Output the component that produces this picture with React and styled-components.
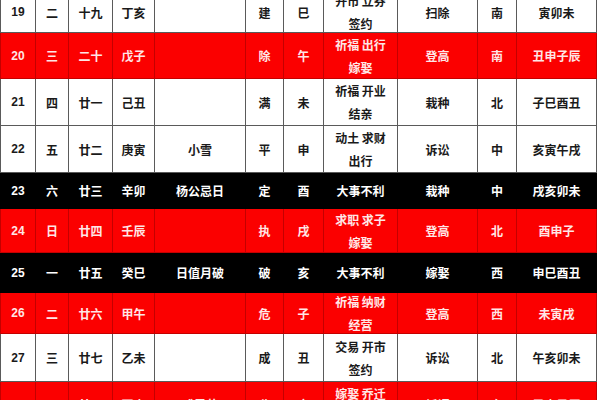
import React from "react";
import styled, { createGlobalStyle } from "styled-components";

const GlobalStyle = createGlobalStyle`
  html, body {
    margin: 0;
    padding: 0;
    background: #ffffff;
  }
  body {
    font-family: "Noto Sans CJK SC", "Noto Sans", sans-serif;
  }
`;

const cols = [35, 33, 44, 42, 91, 38, 40, 74, 80, 39, 80];

const rows = [
  { h: 36, tone: "white", d: ["19", "二", "十九", "丁亥", "", "建", "巳", ["开市 立券", "签约"], "扫除", "南", "寅卯未"] },
  { h: 46, tone: "red", d: ["20", "三", "二十", "戊子", "", "除", "午", ["祈福 出行", "嫁娶"], "登高", "南", "丑申子辰"] },
  { h: 47, tone: "white", d: ["21", "四", "廿一", "己丑", "", "满", "未", ["祈福 开业", "结亲"], "栽种", "北", "子巳酉丑"] },
  { h: 47, tone: "white", d: ["22", "五", "廿二", "庚寅", "小雪", "平", "申", ["动土 求财", "出行"], "诉讼", "中", "亥寅午戌"] },
  { h: 36, tone: "black", d: ["23", "六", "廿三", "辛卯", "杨公忌日", "定", "酉", "大事不利", "栽种", "中", "戌亥卯未"] },
  { h: 44, tone: "red", d: ["24", "日", "廿四", "壬辰", "", "执", "戌", ["求职 求子", "嫁娶"], "登高", "北", "酉申子"] },
  { h: 40, tone: "black", d: ["25", "一", "廿五", "癸巳", "日值月破", "破", "亥", "大事不利", "嫁娶", "西", "申巳酉丑"] },
  { h: 41, tone: "red", d: ["26", "二", "廿六", "甲午", "", "危", "子", ["祈福 纳财", "经营"], "登高", "西", "未寅戌"] },
  { h: 48, tone: "white", d: ["27", "三", "廿七", "乙未", "", "成", "丑", ["交易 开市", "签约"], "诉讼", "北", "午亥卯未"] },
  { h: 46, tone: "red", d: ["28", "四", "廿八", "丙申", "感恩节", "收", "寅", ["嫁娶 乔迁", "祭祀"], "祈福", "东", "巳申子辰"] },
];

const tones = {
  white: { bg: "#ffffff", fg: "#1a1a1a", line: "#5a5a5a" },
  red: { bg: "#fb0000", fg: "#ffe6e6", line: "#c40000" },
  black: { bg: "#000000", fg: "#ffffff", line: "#000000" },
};

export default function App() {
  return (
    <>
      <GlobalStyle />
      <Viewport>
        <Table>
          <colgroup>
            {cols.map((w, i) => (
              <Col key={i} $w={w} />
            ))}
          </colgroup>
          <tbody>
            {rows.map((row) => (
              <Row key={row.d[0]} $h={row.h} $tone={row.tone}>
                {row.d.map((cell, i) => (
                  <Cell key={i} $tone={row.tone} $num={i === 0}>
                    {Array.isArray(cell) ? (
                      <Lines>
                        {cell.map((line, j) => (
                          <span key={j}>{line}</span>
                        ))}
                      </Lines>
                    ) : (
                      cell
                    )}
                  </Cell>
                ))}
              </Row>
            ))}
          </tbody>
        </Table>
      </Viewport>
    </>
  );
}

const Viewport = styled.div`
  width: 600px;
  height: 400px;
  overflow: hidden;
  background: #ffffff;
`;

const Table = styled.table`
  width: 596px;
  margin-top: -9px;
  border-collapse: collapse;
  table-layout: fixed;
`;

const Col = styled.col`
  width: ${(p) => p.$w}px;
`;

const Row = styled.tr`
  height: ${(p) => p.$h}px;
  background: ${(p) => tones[p.$tone].bg};
`;

const Cell = styled.td`
  padding: 0;
  border: 1.5px solid ${(p) => tones[p.$tone].line};
  color: ${(p) => tones[p.$tone].fg};
  font-family: ${(p) =>
    p.$num
      ? '"Liberation Sans", Arial, sans-serif'
      : '"Noto Sans CJK SC", "Noto Sans", sans-serif'};
  font-size: 12px;
  font-weight: 700;
  text-align: center;
  vertical-align: middle;
  white-space: nowrap;
  overflow: hidden;
`;

const Lines = styled.div`
  display: flex;
  flex-direction: column;
  align-items: center;
  gap: 6px;
  line-height: 17px;
`;
